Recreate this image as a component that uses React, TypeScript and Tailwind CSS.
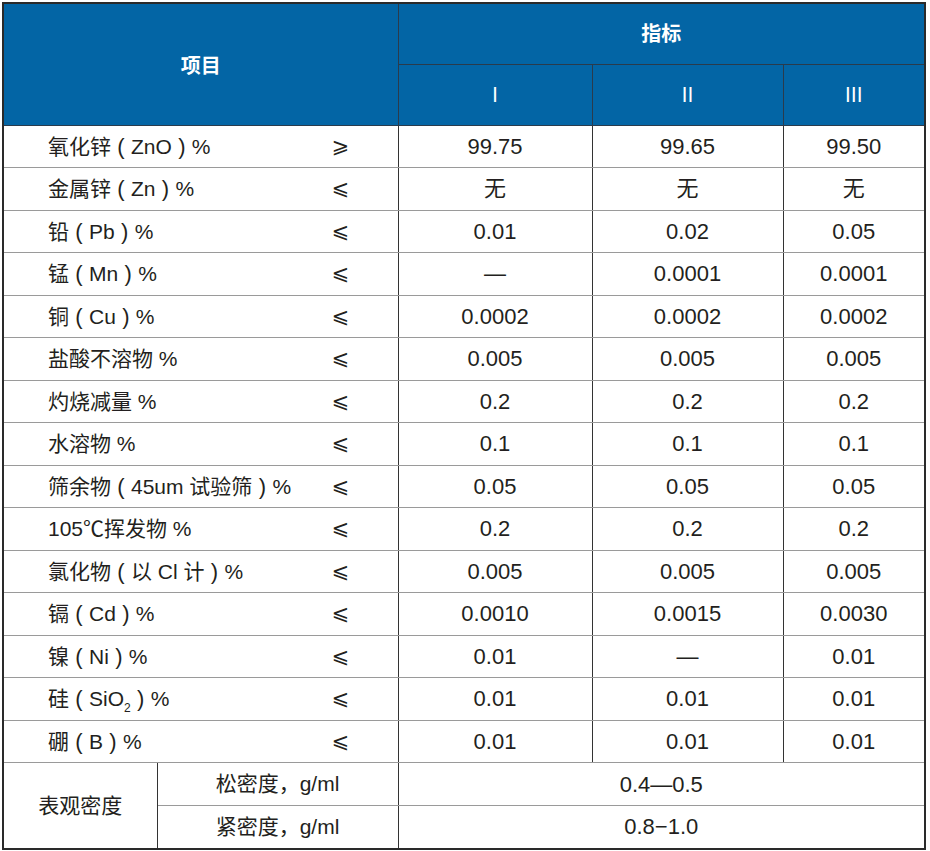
import React from 'react';

type Row = { label: React.ReactNode; sign: string; values: [string, string, string] };

const Paren: React.FC<{ children: string }> = ({ children }) => (
  <span className="inline-block w-[20px] text-center text-[22px] font-light">{children}</span>
);

// name ( inner ) %
const withParen = (name: string, inner: React.ReactNode) => (
  <>
    {name}
    <Paren>(</Paren>
    {inner}
    <Paren>)</Paren>%
  </>
);

const rows: Row[] = [
  { label: withParen('氧化锌', 'ZnO'), sign: '⩾', values: ['99.75', '99.65', '99.50'] },
  { label: withParen('金属锌', 'Zn'), sign: '⩽', values: ['无', '无', '无'] },
  { label: withParen('铅', 'Pb'), sign: '⩽', values: ['0.01', '0.02', '0.05'] },
  { label: withParen('锰', 'Mn'), sign: '⩽', values: ['—', '0.0001', '0.0001'] },
  { label: withParen('铜', 'Cu'), sign: '⩽', values: ['0.0002', '0.0002', '0.0002'] },
  { label: '盐酸不溶物 %', sign: '⩽', values: ['0.005', '0.005', '0.005'] },
  { label: '灼烧减量 %', sign: '⩽', values: ['0.2', '0.2', '0.2'] },
  { label: '水溶物 %', sign: '⩽', values: ['0.1', '0.1', '0.1'] },
  { label: withParen('筛余物', '45um 试验筛'), sign: '⩽', values: ['0.05', '0.05', '0.05'] },
  { label: '105℃挥发物 %', sign: '⩽', values: ['0.2', '0.2', '0.2'] },
  { label: withParen('氯化物', '以 Cl 计'), sign: '⩽', values: ['0.005', '0.005', '0.005'] },
  { label: withParen('镉', 'Cd'), sign: '⩽', values: ['0.0010', '0.0015', '0.0030'] },
  { label: withParen('镍', 'Ni'), sign: '⩽', values: ['0.01', '—', '0.01'] },
  {
    label: withParen(
      '硅',
      <>
        SiO<sub className="text-[12px] align-[-3px] leading-none">2</sub>
      </>
    ),
    sign: '⩽',
    values: ['0.01', '0.01', '0.01'],
  },
  { label: withParen('硼', 'B'), sign: '⩽', values: ['0.01', '0.01', '0.01'] },
];

const font = "font-['Liberation_Sans','Noto_Sans_CJK_SC',sans-serif]";
const cell = 'border-y border-y-[#9a9a9a] border-x border-x-[#333]';
const head = 'border border-[#2a3b4c]';

export default function App() {
  return (
    <div className={`bg-white w-[930px] h-[851px] pt-[2px] pl-[2px] ${font} text-[#231f20]`}>
      <table className="table-fixed border-collapse w-[924px] border-2 border-[#2a2a2a]">
        <colgroup>
          <col className="w-[154px]" />
          <col className="w-[241px]" />
          <col className="w-[194px]" />
          <col className="w-[191px]" />
          <col />
        </colgroup>
        <thead>
          <tr className="h-[61px] bg-[#0365a5] text-white">
            <th colSpan={2} rowSpan={2} className={`${head} text-[20px] font-bold pt-[3px]`}>
              项目
            </th>
            <th colSpan={3} className={`${head} text-[20px] font-bold`}>
              指标
            </th>
          </tr>
          <tr className="h-[61px] bg-[#0365a5] text-white text-[20px]">
            <th className={`${head} font-normal`}>Ⅰ</th>
            <th className={`${head} font-normal`}>Ⅱ</th>
            <th className={`${head} font-normal`}>Ⅲ</th>
          </tr>
        </thead>
        <tbody>
          {rows.map((r, i) => (
            <tr key={i} className="h-[42.5px]">
              <td colSpan={2} className={`${cell} p-0 text-[21px]`}>
                <div className="flex items-center pl-[44px] pr-[37px]">
                  <span className="flex-1 whitespace-nowrap">{r.label}</span>
                  <span className="w-[40px] text-center font-['DejaVu_Sans',sans-serif] text-[21px]">
                    {r.sign}
                  </span>
                </div>
              </td>
              {r.values.map((v, j) => (
                <td key={j} className={`${cell} p-0 text-center text-[22px]`}>
                  {v}
                </td>
              ))}
            </tr>
          ))}
          <tr className="h-[43px]">
            <td rowSpan={2} className={`${cell} text-center text-[21px]`}>
              表观密度
            </td>
            <td className={`${cell} text-center text-[21px]`}>松密度，g/ml</td>
            <td colSpan={3} className={`${cell} text-center text-[22px]`}>
              0.4—0.5
            </td>
          </tr>
          <tr className="h-[43px]">
            <td className={`${cell} text-center text-[21px]`}>紧密度，g/ml</td>
            <td colSpan={3} className={`${cell} text-center text-[22px]`}>
              0.8−1.0
            </td>
          </tr>
        </tbody>
      </table>
    </div>
  );
}
